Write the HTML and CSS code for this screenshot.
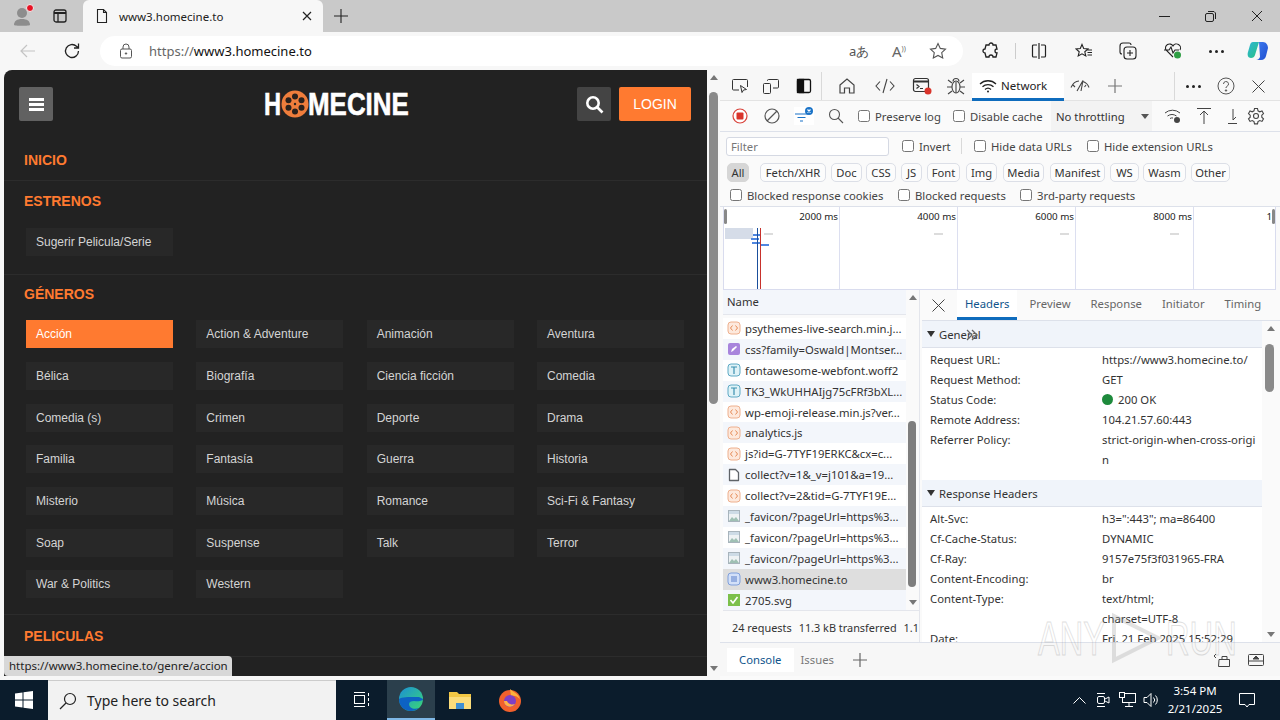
FILE: index.html
```html
<!DOCTYPE html>
<html lang="en">
<head>
  <meta charset="UTF-8" />
  <title>www3.homecine.to</title>
  <link rel="stylesheet" href="styles.css">
</head>
<body>
  <svg class="defs" width="0" height="0">
    <symbol id="i-script" viewBox="0 0 14 14">
      <rect x="1" y="1" width="12" height="12" rx="3" fill="#fde9dd" stroke="#eeb08e"/>
      <path d="M5.5 4.5 3.5 7l2 2.5M8.5 4.5l2 2.5-2 2.5" fill="none" stroke="#e58a55"/>
    </symbol>
    <symbol id="i-css" viewBox="0 0 14 14">
      <rect x="1" y="1" width="12" height="12" rx="2" fill="#a884dc"/>
      <path d="M4 10l1-3 4-3 1 1-4 4z" fill="#fff"/>
    </symbol>
    <symbol id="i-font" viewBox="0 0 14 14">
      <rect x="1" y="1" width="12" height="12" rx="3" fill="#dff2f7" stroke="#5fa9c4"/>
      <path d="M4 4h6M7 4v7" fill="none" stroke="#3b8fb0" stroke-width="1.2"/>
    </symbol>
    <symbol id="i-doc" viewBox="0 0 14 14">
      <path d="M2.5 1.500h6l3 3v8h-9z" fill="#fff" stroke="#5f6368" stroke-width="1.300" stroke-linejoin="round"/>
    </symbol>
    <symbol id="i-img" viewBox="0 0 14 14">
      <rect x="1.500" y="1.500" width="11" height="11" fill="#eef2f4" stroke="#a8b4bc"/>
      <path d="M2 12l3-4 2 2 2-2 3 4z" fill="#9fc0b4"/>
      <rect x="2" y="2" width="10" height="3" fill="#cddbe6"/>
    </symbol>
    <symbol id="i-page" viewBox="0 0 14 14">
      <rect x="1" y="1" width="12" height="12" rx="3" fill="#d3e0f8" stroke="#7f9fdb"/>
      <path d="M4 5h6M4 7h6M4 9h6" stroke="#5b7fc9"/>
    </symbol>
    <symbol id="i-check" viewBox="0 0 14 14">
      <rect x="1" y="1" width="12" height="12" fill="#7cc04b"/>
      <path d="M3.500 7l2.500 3 4.500-6" fill="none" stroke="#fff" stroke-width="1.600"/>
    </symbol>
  </svg>

  <div class="tabstrip">
    <div class="strip-left">
      <svg class="avatar" width="24" height="24" viewBox="0 0 24 24">
        <circle cx="11" cy="9" r="5" fill="#8d8d8d"/>
        <path d="M3 21c0-4 3-6 8-6s8 2 8 6c0 1-16 1-16 0z" fill="#8d8d8d"/>
        <circle cx="19" cy="4" r="3.500" fill="#e81123" stroke="#eee"/>
      </svg>
      <svg width="16" height="16" viewBox="0 0 16 16" fill="none" stroke="#222" stroke-width="1.300">
        <rect x="2" y="2" width="12" height="12" rx="2"/>
        <path d="M2 5h12" stroke-width="2"/>
        <path d="M6 5v9"/>
      </svg>
    </div>
    <div class="tab">
      <svg width="16" height="16" viewBox="0 0 16 16" fill="none" stroke="#222" stroke-width="1.100"><path d="M3.500 1.500h6l3 3v10h-9zM9.500 1.500v3h3"/></svg>
      <span class="tab-title">www3.homecine.to</span>
      <svg width="10" height="10" viewBox="0 0 10 10" stroke="#222" stroke-width="1.200"><path d="M1 1l8 8M9 1l-8 8"/></svg>
    </div>
    <svg class="new-tab" width="14" height="14" viewBox="0 0 14 14" stroke="#222" stroke-width="1.100"><path d="M7 0v14M0 7h14"/></svg>
    <div class="win-controls">
      <svg width="11" height="11" viewBox="0 0 11 11" stroke="#222"><path d="M0 5.500h11"/></svg>
      <svg width="11" height="11" viewBox="0 0 11 11" fill="none" stroke="#222"><rect x="0.500" y="2.500" width="8" height="8" rx="1.500"/><path d="M3 .500h6l1.500 1.500v6"/></svg>
      <svg width="12" height="12" viewBox="0 0 12 12" stroke="#222"><path d="M1 1l10 10M11 1L1 11"/></svg>
    </div>
  </div>

  <div class="toolbar">
    <svg class="tb-back" width="16" height="14" viewBox="0 0 16 14" fill="none" stroke="#c4c4c4" stroke-width="1.200"><path d="M15 7H1M7 1L1 7l6 6"/></svg>
    <svg class="tb-reload" width="18" height="18" viewBox="0 0 18 18" fill="none" stroke="#222" stroke-width="1.300"><path d="M15.500 9a6.500 6.500 0 1 1-2-4.700L15.500 6M15.500 1.500V6H11"/></svg>
    <div class="addressbar">
      <svg width="14" height="16" viewBox="0 0 14 16" fill="none" stroke="#555"><rect x="1.500" y="6" width="11" height="9" rx="1.500"/><path d="M4 6V4a3 3 0 0 1 6 0v2"/><circle cx="7" cy="10.500" r="0.700" fill="#555"/></svg>
      <div class="url"><span class="url-scheme">https://</span>www3.homecine.to</div>
      <span class="addr-glyph">aあ</span>
      <span class="addr-read">A<sup>))</sup></span>
      <svg width="18" height="18" viewBox="0 0 18 18" fill="none" stroke="#555" stroke-width="1.100"><path d="M9 1.500l2.300 4.900 5.200.7-3.800 3.600 1 5.300L9 13.400 4.300 16l1-5.300L1.500 7.100l5.200-.7z"/></svg>
    </div>
    <div class="tb-icons">
      <svg width="18" height="18" viewBox="0 0 18 18" fill="none" stroke="#222" stroke-width="1.300"><path d="M7 3a2 2 0 0 1 4 0h3l1 4a2 2 0 0 0 0 4l-1 4h-3a2 2 0 0 0-4 0H4l-1-4a2 2 0 0 1 0-4l1-4z"/></svg>
      <span class="tb-sep"></span>
      <svg width="16" height="16" viewBox="0 0 16 16" fill="none" stroke="#222" stroke-width="1.200"><path d="M6 2H2.500a1 1 0 0 0-1 1v10a1 1 0 0 0 1 1H6M10 2h3.500a1 1 0 0 1 1 1v10a1 1 0 0 1-1 1H10M8 0v16"/></svg>
      <svg class="tb-fav" width="18" height="16" viewBox="0 0 18 16" fill="none" stroke="#222" stroke-width="1.100"><path d="M7 1.500l1.700 4 4.300.4-3.200 2.900 1 4.200L7 10.800l-3.800 2.200 1-4.200L1 5.900l4.300-.4zM12.500 7H17M12.500 9.500H17M12.500 12H17"/></svg>
      <svg class="tb-coll" width="18" height="18" viewBox="0 0 18 18" fill="none" stroke="#222" stroke-width="1.100"><rect x="5" y="5" width="12" height="12" rx="3"/><path d="M11 8v6M8 11h6M3 12a2 2 0 0 1-2-2V4a3 3 0 0 1 3-3h6a2 2 0 0 1 2 2"/></svg>
      <svg class="tb-health" width="20" height="18" viewBox="0 0 20 18" fill="none" stroke="#222" stroke-width="1.100"><path d="M10 15L3 8a4 4 0 0 1 7-4 4 4 0 0 1 7 4M1 8h5l2-3 2 6 2-3h4"/><circle cx="14.500" cy="13" r="3.500" fill="#2f9e44" stroke="none"/></svg>
      <span class="dots">
        <i></i><i></i><i></i>
      </span>
      <svg class="tb-copilot" width="24" height="24" viewBox="0 0 24 24">
        <defs>
          <linearGradient id="cp-a" x1="0" y1="0" x2="1" y2="1"><stop offset="0" stop-color="#2fb6d8"/><stop offset="1" stop-color="#27c17f"/></linearGradient>
          <linearGradient id="cp-b" x1="0" y1="0" x2="1" y2="1"><stop offset="0" stop-color="#3f7cf0"/><stop offset="1" stop-color="#1f4fd0"/></linearGradient>
        </defs>
        <path d="M7 3h6l-4 13c-.5 2-2 3-4 3-3 0-4-3-3-6l2-7c.5-2 1.500-3 3-3z" fill="url(#cp-a)"/>
        <path d="M13 3h4c3 0 5 3 5 6l-2 8c-.5 2-2 4-5 4h-5c2 0 3-1 4-3z" fill="url(#cp-b)"/>
      </svg>
    </div>
  </div>

  <div class="main">
    <div class="page">
      <header class="site-head">
        <button class="menu-btn"><span></span><span></span><span></span></button>
        <div class="logo">
          <span class="logo-h">H</span>
          <svg width="28" height="28" viewBox="0 0 28 28">
            <circle cx="14" cy="14" r="13.500" fill="#ef7d3c"/>
            <g fill="#2a211d">
              <circle cx="14" cy="6.500" r="3"/><circle cx="14" cy="21.500" r="3"/>
              <circle cx="7.500" cy="10.300" r="3"/><circle cx="20.500" cy="10.300" r="3"/>
              <circle cx="7.500" cy="17.700" r="3"/><circle cx="20.500" cy="17.700" r="3"/>
              <circle cx="14" cy="14" r="1.200"/>
            </g>
          </svg>
          <span class="logo-rest">MECINE</span>
        </div>
        <div class="head-actions">
          <button class="search-btn">
            <svg width="19" height="19" viewBox="0 0 19 19" fill="none" stroke="#fff" stroke-width="2.600"><circle cx="8" cy="8" r="5.700"/><path d="M12 12l5.500 5.500"/></svg>
          </button>
          <button class="login-btn">LOGIN</button>
        </div>
      </header>

      <nav>
        <section class="nav-sec sec-home"><h2>INICIO</h2></section>
        <section class="nav-sec sec-new">
          <h2>ESTRENOS</h2>
          <div class="genres"><a>Sugerir Pelicula/Serie</a></div>
        </section>
        <section class="nav-sec sec-genres">
          <h2>GÉNEROS</h2>
          <div class="genres">
            <a class="on">Acción</a><a>Action &amp; Adventure</a><a>Animación</a><a>Aventura</a>
            <a>Bélica</a><a>Biografía</a><a>Ciencia ficción</a><a>Comedia</a>
            <a>Comedia (s)</a><a>Crimen</a><a>Deporte</a><a>Drama</a>
            <a>Familia</a><a>Fantasía</a><a>Guerra</a><a>Historia</a>
            <a>Misterio</a><a>Música</a><a>Romance</a><a>Sci-Fi &amp; Fantasy</a>
            <a>Soap</a><a>Suspense</a><a>Talk</a><a>Terror</a>
            <a>War &amp; Politics</a><a>Western</a>
          </div>
        </section>
        <section class="nav-sec sec-movies"><h2>PELICULAS</h2></section>
      </nav>
      <div class="status-bubble">https://www3.homecine.to/genre/accion</div>
    </div>

    <div class="page-scroll">
      <span class="arrow-up"></span>
      <span class="page-thumb"></span>
      <span class="arrow-down"></span>
    </div>

    <div class="devtools">
      <div class="dt-tabs">
        <svg width="18" height="16" viewBox="0 0 18 16" fill="none" stroke="#333"><path d="M8 12H2.500a1 1 0 0 1-1-1V2.500a1 1 0 0 1 1-1h13a1 1 0 0 1 1 1V9"/><path d="M9.500 7.500l1.500 7 1.500-2.500 3-.5z"/></svg>
        <svg width="18" height="16" viewBox="0 0 18 16" fill="none" stroke="#333"><rect x="1.500" y="5.500" width="7" height="10" rx="1"/><path d="M5.500 3V2.500a1 1 0 0 1 1-1h9a1 1 0 0 1 1 1V9a1 1 0 0 1-1 1H11"/></svg>
        <svg width="16" height="16" viewBox="0 0 16 16" fill="none" stroke="#111" stroke-width="1.300"><rect x="1.500" y="1.500" width="13" height="13" rx="1.500"/><rect x="1.500" y="1.500" width="6" height="13" fill="#111"/></svg>
        <span class="dt-sep"></span>
        <svg width="18" height="18" viewBox="0 0 18 18" fill="none" stroke="#444" stroke-width="1.200"><path d="M2 8l7-6 7 6v8h-4.500v-5h-5v5H2z"/></svg>
        <svg class="ic-code" width="20" height="16" viewBox="0 0 20 16" fill="none" stroke="#444" stroke-width="1.100"><path d="M5 3.500L1 8l4 4.500M15 3.500L19 8l-4 4.500M12 1L8 15"/></svg>
        <span class="ic-console">
          <svg width="20" height="18" viewBox="0 0 20 18" fill="none" stroke="#333" stroke-width="1.200"><rect x="1.500" y="1.500" width="15" height="13" rx="2"/><path d="M1.500 4.500h15" stroke-width="2"/><path d="M4.500 7.500l2.500 2-2.500 2M8 11.500h3"/><circle cx="16" cy="14" r="3.500" fill="#d9342b" stroke="none"/></svg>
        </span>
        <svg class="ic-bug" width="18" height="18" viewBox="0 0 18 18" fill="none" stroke="#444" stroke-width="1.100"><ellipse cx="9" cy="10" rx="4" ry="6"/><path d="M6 4.500a3 3 0 0 1 6 0M1 3l4 3M17 3l-4 3M0 10h5M18 10h-5M1 17l4-3M17 17l-4-3M9 5v11"/></svg>
        <div class="dt-network">
          <svg width="18" height="14" viewBox="0 0 18 14" fill="none" stroke="#222" stroke-width="1.300"><path d="M1 5a11.500 11.500 0 0 1 16 0M3.500 7.800a8 8 0 0 1 11 0M6 10.500a4.500 4.500 0 0 1 6 0"/><circle cx="9" cy="12.500" r="1" fill="#222" stroke="none"/></svg>
          <span>Network</span>
        </div>
        <svg class="ic-perf" width="20" height="14" viewBox="0 0 20 14" fill="none" stroke="#444" stroke-width="1.100"><path d="M1 8.500C3 4 6 2 9 2M13 2.500c3 1 5 3 6 6M7 12l6-10.500-2 10.500M3 6l2 2M16 6l-1.500 2"/></svg>
        <svg class="ic-plus" width="14" height="14" viewBox="0 0 14 14" stroke="#777" stroke-width="1.200"><path d="M7 0v14M0 7h14"/></svg>
        <span class="dt-sep sep-end"></span>
        <span class="dots dots-dt"><i></i><i></i><i></i></span>
        <svg class="ic-help" width="18" height="18" viewBox="0 0 18 18" fill="none" stroke="#555"><circle cx="9" cy="9" r="8"/><path d="M6.500 7a2.500 2.500 0 1 1 3.500 2.300c-.8.400-1 .9-1 1.700"/><circle cx="9" cy="13.500" r=".7" fill="#555"/></svg>
        <svg class="ic-close" width="13" height="13" viewBox="0 0 13 13" stroke="#444"><path d="M.500.500l12 12M12.500.500l-12 12"/></svg>
      </div>

      <div class="dt-tools">
        <svg width="16" height="16" viewBox="0 0 16 16"><circle cx="8" cy="8" r="7" fill="#fff" stroke="#d9423a" stroke-width="1.200"/><rect x="4.500" y="4.500" width="7" height="7" rx="1" fill="#d9342b"/></svg>
        <svg class="ic-clear" width="16" height="16" viewBox="0 0 16 16" fill="none" stroke="#555" stroke-width="1.200"><circle cx="8" cy="8" r="7"/><path d="M3 13L13 3"/></svg>
        <svg class="ic-filter" width="20" height="18" viewBox="0 0 20 18" fill="none" stroke="#1a73c7" stroke-width="1.200"><path d="M1 7h13M3.500 10.500h8M6 14h3"/><circle cx="15" cy="4" r="4" fill="#1a73c7" stroke="none"/><path d="M13.500 2.500l3 3M16.500 2.500l-3 3" stroke="#fff"/></svg>
        <svg class="ic-search" width="16" height="16" viewBox="0 0 16 16" fill="none" stroke="#555" stroke-width="1.100"><circle cx="6.500" cy="6.500" r="5"/><path d="M10 10l5 5"/></svg>
        <label class="cb lb-preserve"><input type="checkbox">Preserve log</label>
        <label class="cb lb-cache"><input type="checkbox">Disable cache</label>
        <div class="throttle"><span>No throttling</span><i class="caret"></i></div>
        <svg class="ic-wifi" width="18" height="16" viewBox="0 0 18 16" fill="none" stroke="#444"><path d="M1 5a11.500 11.500 0 0 1 15 0M3.500 8a8 8 0 0 1 9 0M6 10.500a4 4 0 0 1 3-.5"/><circle cx="13" cy="12" r="3" fill="#444" stroke="none"/></svg>
        <svg class="ic-up" width="14" height="16" viewBox="0 0 14 16" fill="none" stroke="#444"><path d="M0 .500h14M7 3v13M3 7l4-4 4 4"/></svg>
        <svg class="ic-down" width="10" height="16" viewBox="0 0 10 16" fill="none" stroke="#444"><path d="M1 15.500h9M6 1v11M9 9l-3 3"/></svg>
        <svg class="ic-gear" width="18" height="18" viewBox="0 0 18 18" fill="none" stroke="#444" stroke-width="1.100"><path d="M7.500 1.500h3l.5 2.300 1.800 1 2.200-.8 1.500 2.600-1.700 1.600v2l1.700 1.600-1.500 2.600-2.200-.8-1.800 1-.5 2.300h-3l-.5-2.300-1.800-1-2.200.8-1.500-2.600 1.700-1.600v-2L1.500 6.600 3 4l2.200.8 1.800-1z"/><circle cx="9" cy="9" r="2.500"/></svg>
      </div>

      <div class="dt-filter">
        <div class="filter-input">Filter</div>
        <label class="cb lb-invert"><input type="checkbox">Invert</label>
        <span class="dt-sep filter-sep"></span>
        <label class="cb lb-data"><input type="checkbox">Hide data URLs</label>
        <label class="cb lb-ext"><input type="checkbox">Hide extension URLs</label>
      </div>

      <div class="chips">
        <span class="chip chip-on">All</span>
        <span class="chip">Fetch/XHR</span>
        <span class="chip">Doc</span>
        <span class="chip">CSS</span>
        <span class="chip">JS</span>
        <span class="chip">Font</span>
        <span class="chip">Img</span>
        <span class="chip">Media</span>
        <span class="chip">Manifest</span>
        <span class="chip">WS</span>
        <span class="chip">Wasm</span>
        <span class="chip">Other</span>
      </div>

      <div class="dt-blocked">
        <label class="cb lb-cookies"><input type="checkbox">Blocked response cookies</label>
        <label class="cb lb-requests"><input type="checkbox">Blocked requests</label>
        <label class="cb"><input type="checkbox">3rd-party requests</label>
      </div>

      <div class="overview">
        <div class="ov-col"><span>2000 ms</span></div>
        <div class="ov-col"><span>4000 ms</span></div>
        <div class="ov-col"><span>6000 ms</span></div>
        <div class="ov-col"><span>8000 ms</span></div>
        <div class="ov-col ov-last"><span>1</span></div>
        <i class="ov-handle ov-left"></i>
        <i class="ov-handle ov-right"></i>
        <i class="ov-block"></i>
        <i class="ov-bar bar-a"></i><i class="ov-bar bar-b"></i><i class="ov-bar bar-c"></i><i class="ov-bar bar-d"></i>
        <i class="ov-dash dash-a"></i><i class="ov-dash dash-b"></i><i class="ov-dash dash-c"></i><i class="ov-dash dash-d"></i>
        <i class="ov-line line-blue"></i>
        <i class="ov-line line-red"></i>
      </div>

      <div class="split">
        <div class="reqs">
          <div class="reqs-body">
            <div class="reqs-table">
              <div class="reqs-head">Name</div>
              <ul class="req-list">
                <li><svg width="14" height="14"><use href="#i-script"/></svg><span>psythemes-live-search.min.j...</span></li>
                <li><svg width="14" height="14"><use href="#i-css"/></svg><span>css?family=Oswald|Montser...</span></li>
                <li><svg width="14" height="14"><use href="#i-font"/></svg><span>fontawesome-webfont.woff2</span></li>
                <li><svg width="14" height="14"><use href="#i-font"/></svg><span>TK3_WkUHHAIjg75cFRf3bXL...</span></li>
                <li><svg width="14" height="14"><use href="#i-script"/></svg><span>wp-emoji-release.min.js?ver...</span></li>
                <li><svg width="14" height="14"><use href="#i-script"/></svg><span>analytics.js</span></li>
                <li><svg width="14" height="14"><use href="#i-script"/></svg><span>js?id=G-7TYF19ERKC&amp;cx=c...</span></li>
                <li><svg width="14" height="14"><use href="#i-doc"/></svg><span>collect?v=1&amp;_v=j101&amp;a=19...</span></li>
                <li><svg width="14" height="14"><use href="#i-script"/></svg><span>collect?v=2&amp;tid=G-7TYF19E...</span></li>
                <li><svg width="14" height="14"><use href="#i-img"/></svg><span>_favicon/?pageUrl=https%3...</span></li>
                <li><svg width="14" height="14"><use href="#i-img"/></svg><span>_favicon/?pageUrl=https%3...</span></li>
                <li><svg width="14" height="14"><use href="#i-img"/></svg><span>_favicon/?pageUrl=https%3...</span></li>
                <li class="sel"><svg width="14" height="14"><use href="#i-page"/></svg><span>www3.homecine.to</span></li>
                <li><svg width="14" height="14"><use href="#i-check"/></svg><span>2705.svg</span></li>
              </ul>
            </div>
            <div class="list-scroll">
              <span class="arrow-up"></span>
              <span class="list-thumb"></span>
              <span class="arrow-down"></span>
            </div>
          </div>
          <div class="reqs-foot">
            <span>24 requests</span><span>11.3 kB transferred</span><span>1.1</span>
          </div>
        </div>

        <div class="details">
          <div class="detail-tabs">
            <svg width="13" height="13" viewBox="0 0 13 13" stroke="#444"><path d="M.500.500l12 12M12.500.500l-12 12"/></svg>
            <span class="dtab dtab-on">Headers</span>
            <span class="dtab">Preview</span>
            <span class="dtab">Response</span>
            <span class="dtab">Initiator</span>
            <span class="dtab">Timing</span>
          </div>
          <div class="detail-body">
            <div class="detail-scrollarea">
              <h3 class="group"><i class="tri"></i>General</h3>
              <dl class="kv">
                <dt>Request URL:</dt><dd>https://www3.homecine.to/</dd>
                <dt>Request Method:</dt><dd>GET</dd>
                <dt>Status Code:</dt><dd><i class="dot"></i>200 OK</dd>
                <dt>Remote Address:</dt><dd>104.21.57.60:443</dd>
                <dt>Referrer Policy:</dt><dd>strict-origin-when-cross-origi<br>n</dd>
              </dl>
              <h3 class="group"><i class="tri"></i>Response Headers</h3>
              <dl class="kv">
                <dt>Alt-Svc:</dt><dd>h3=":443"; ma=86400</dd>
                <dt>Cf-Cache-Status:</dt><dd>DYNAMIC</dd>
                <dt>Cf-Ray:</dt><dd>9157e75f3f031965-FRA</dd>
                <dt>Content-Encoding:</dt><dd>br</dd>
                <dt>Content-Type:</dt><dd>text/html;<br>charset=UTF-8</dd>
                <dt>Date:</dt><dd class="nowrap">Fri, 21 Feb 2025 15:52:29</dd>
              </dl>
            </div>
            <div class="detail-scroll">
              <span class="arrow-up"></span>
              <span class="detail-thumb"></span>
              <span class="arrow-down"></span>
            </div>
            <svg class="cursor" width="13" height="12" viewBox="0 0 13 12" fill="none" stroke="#666" stroke-width="1.300"><path d="M1 1l5 5-5 5M6 1l5 5-5 5"/></svg>
          </div>
        </div>
      </div>

      <div class="drawer">
        <span class="drawer-tab drawer-on">Console</span>
        <span class="drawer-tab drawer-issues">Issues</span>
        <svg width="14" height="14" viewBox="0 0 14 14" stroke="#666" stroke-width="1.200"><path d="M7 0v14M0 7h14"/></svg>
        <svg class="ic-dock" width="18" height="14" viewBox="0 0 18 14" fill="none" stroke="#444"><path d="M6 6.500h10.500v7h-11zM9 6.500V3.500h5v3M1 3l2-2M1 3l2 2"/></svg>
        <svg class="ic-dock2" width="18" height="14" viewBox="0 0 18 14" fill="none" stroke="#444"><rect x="1.500" y="1.500" width="15" height="11" rx="1"/><path d="M1.500 8h15"/><path d="M6 6l3-3 3 3z" fill="#444"/></svg>
      </div>

      <div class="watermark">
        <span>ANY</span>
        <svg width="56" height="56" viewBox="0 0 56 56" fill="none" stroke="#999" stroke-width="4"><path d="M6 6l44 22-44 22z"/></svg>
        <span>RUN</span>
      </div>
    </div>
  </div>

  <footer class="taskbar">
    <div class="start">
      <svg width="18" height="18" viewBox="0 0 18 18" fill="#fff"><path d="M0 2.500l7.500-1v7H0zM8.500 1.300L18 0v8.500H8.500zM0 9.500h7.500v7l-7.500-1zM8.500 9.500H18V18l-9.500-1.300z"/></svg>
    </div>
    <div class="task-search">
      <svg width="18" height="18" viewBox="0 0 18 18" fill="none" stroke="#222" stroke-width="1.200"><circle cx="11" cy="7" r="5.500"/><path d="M7 11l-6 6"/></svg>
      <span>Type here to search</span>
    </div>
    <div class="task-view">
      <svg width="17" height="16" viewBox="0 0 17 16" fill="none" stroke="#fff"><rect x="1.500" y="3.500" width="10" height="8"/><path d="M1 .500h11M1 14.500h11M15.500 1v3M15.500 6v3M15.500 11v3" /></svg>
    </div>
    <div class="task-edge">
      <svg width="26" height="26" viewBox="0 0 26 26">
        <defs>
          <linearGradient id="ed-a" x1="0" y1="0" x2="1" y2="1"><stop offset="0" stop-color="#1b8fd6"/><stop offset="1" stop-color="#3bd873"/></linearGradient>
        </defs>
        <circle cx="13" cy="13" r="12" fill="url(#ed-a)"/>
        <path d="M1 13c0 7 5 12 12 12 3 0 6-1 8-3-5 2-10 0-10-4 0-2 2-3 5-3 3 0 4 1 9-1 0-1-2-3-6-3-9 0-15 0-18 2z" fill="#0d62c4"/>
      </svg>
    </div>
    <div class="task-app">
      <svg width="24" height="22" viewBox="0 0 24 22"><path d="M1 3h8l2 2h12v15H1z" fill="#f2c744"/><path d="M1 8h22v12H1z" fill="#fbdc7a"/><rect x="8" y="14" width="8" height="6" fill="#3f8fd1"/></svg>
    </div>
    <div class="task-app">
      <svg width="24" height="24" viewBox="0 0 24 24"><circle cx="12" cy="13" r="11" fill="#f0602c"/><path d="M12 1c3 3 8 4 10 10-3-3-6-4-9-3z" fill="#fbb03b"/><circle cx="12" cy="13" r="6" fill="#7f3fc4"/><path d="M6 13a6 6 0 0 0 11 3c-3 1-7 0-8-3z" fill="#ffb347"/></svg>
    </div>
    <div class="tray">
      <div class="tray-cell"><svg width="13" height="8" viewBox="0 0 13 8" fill="none" stroke="#fff"><path d="M.500 7.500l6-6 6 6"/></svg></div>
      <div class="tray-cell"><svg width="16" height="18" viewBox="0 0 16 18" fill="none" stroke="#fff"><rect x="2.500" y="5.500" width="7" height="7" rx="1.500"/><path d="M10 8l4-2v6l-4-2M2 2.500h8M2 15.500h8"/></svg></div>
      <div class="tray-cell"><svg width="17" height="16" viewBox="0 0 17 16" fill="none" stroke="#fff"><rect x="3.500" y="1.500" width="13" height="9"/><rect x=".500" y=".500" width="5" height="5" fill="#0b1c2c"/><path d="M10 10.500v4M6 14.500h8"/></svg></div>
      <div class="tray-cell"><svg width="17" height="16" viewBox="0 0 17 16" fill="none" stroke="#fff"><path d="M1 5.500h3l4-4v13l-4-4H1zM10.500 5.500a3.500 3.500 0 0 1 0 5M12.500 3.500a6.500 6.500 0 0 1 0 9"/></svg></div>
      <div class="clock"><span>3:54 PM</span><span>2/21/2025</span></div>
      <svg class="tray-note" width="16" height="15" viewBox="0 0 16 15" fill="none" stroke="#fff"><path d="M.500.500h15v11H10l-2 2.500-2-2.500H.500z"/></svg>
    </div>
  </footer>
</body>
</html>
```

FILE: styles.css
```css
* {
  box-sizing: border-box;
}

body {
  margin: 0;
  width: 1280px;
  height: 720px;
  overflow: hidden;
  display: flex;
  flex-direction: column;
  background: #f7f7f7;
  font-family: "Noto Sans", sans-serif;
  font-size: 12px;
  color: #222;
}

.defs {
  position: absolute;
}

svg {
  display: block;
  flex: none;
}

/* browser chrome */
.tabstrip {
  height: 32px;
  flex: none;
  display: flex;
  align-items: center;
  background: #c9c9c9;
}

.strip-left {
  width: 83px;
  height: 32px;
  display: flex;
  align-items: center;
  gap: 17px;
  padding-left: 11px;
}

.tab {
  width: 240px;
  height: 32px;
  display: flex;
  align-items: center;
  padding: 0 11px 0 11px;
  background: #f7f7f7;
  border-radius: 6px 6px 0 0;
}

.tab-title {
  flex: 1;
  margin-left: 9px;
  font-size: 11.500px;
  color: #222;
}

.new-tab {
  margin-left: 11px;
}

.win-controls {
  margin-left: auto;
  display: flex;
  align-items: center;
  gap: 35px;
  padding-right: 17px;
}

.toolbar {
  height: 38px;
  flex: none;
  display: flex;
  align-items: center;
  background: #f7f7f7;
}

.tb-back {
  margin-left: 20px;
}

.tb-reload {
  margin-left: 27px;
}

.addressbar {
  width: 863px;
  height: 30px;
  margin-left: 19px;
  display: flex;
  align-items: center;
  background: #fff;
  border-radius: 15px;
  padding-left: 19px;
}

.url {
  width: 700px;
  margin-left: 16px;
  font-size: 13px;
  color: #111;
}

.url-scheme {
  color: #666;
}

.addr-glyph {
  width: 43px;
  font-size: 13px;
  color: #555;
}

.addr-read {
  width: 37px;
  font-size: 15px;
  color: #666;
}

.addr-read sup {
  font-size: 7px;
}

.tb-icons {
  display: flex;
  align-items: center;
  margin-left: 19px;
}

.tb-sep {
  width: 1px;
  height: 16px;
  margin: 0 15px;
  background: #ccc;
}

.tb-fav {
  margin-left: 28px;
}

.tb-coll {
  margin-left: 26px;
}

.tb-health {
  margin-left: 26px;
}

.dots {
  display: flex;
  gap: 3px;
  margin-left: 26px;
}

.dots i {
  width: 3px;
  height: 3px;
  border-radius: 50%;
  background: #222;
}

.tb-copilot {
  margin-left: 22px;
}

.main {
  height: 610px;
  flex: none;
  display: flex;
  padding-left: 4px;
  background: #f7f7f7;
}

/* site */
.page {
  position: relative;
  width: 703px;
  height: 606px;
  overflow: hidden;
  background: #222;
  border-radius: 8px 0 0 0;
  font-family: "Liberation Sans", Arial, sans-serif;
  color: #ddd;
}

.site-head {
  height: 70px;
  display: flex;
  justify-content: space-between;
  align-items: flex-start;
  padding: 17px 16px 0 15px;
}

.menu-btn {
  width: 34px;
  height: 34px;
  display: flex;
  flex-direction: column;
  align-items: center;
  justify-content: center;
  gap: 2px;
  padding: 0;
  border: 0;
  border-radius: 2px;
  background: #616161;
}

.menu-btn span {
  width: 15px;
  height: 3px;
  background: #fff;
}

.logo {
  width: 143px;
  height: 34px;
  margin-left: 40px;
  display: flex;
  align-items: center;
  font-weight: 700;
  font-size: 32px;
  color: #fff;
  -webkit-text-stroke: .6px #fff;
}

.logo-h {
  width: 17px;
  display: inline-block;
  transform: scaleX(.74);
  transform-origin: left;
}

.logo-rest {
  width: 99px;
  margin-left: -1px;
  display: inline-block;
  transform: scaleX(.81);
  transform-origin: left;
}

.head-actions {
  display: flex;
  gap: 8px;
}

.search-btn {
  width: 34px;
  height: 34px;
  display: flex;
  align-items: center;
  justify-content: center;
  padding: 0;
  border: 0;
  border-radius: 2px;
  background: #444;
}

.login-btn {
  width: 72px;
  height: 34px;
  padding: 0;
  border: 0;
  border-radius: 2px;
  background: #ff7a30;
  color: #fff;
  font-family: inherit;
  font-size: 14px;
}

.nav-sec {
  padding: 12px 0 0 20px;
  border-bottom: 1px solid #2c2c2c;
}

.nav-sec h2 {
  margin: 0;
  font-size: 14px;
  line-height: 16px;
  color: #ff7a30;
}

.sec-home {
  height: 41px;
}

.sec-new {
  height: 94px;
}

.sec-genres {
  height: 340px;
  padding-top: 11px;
}

.sec-movies {
  height: 42px;
  padding-top: 13px;
}

.genres {
  width: 658px;
  margin: 19px 0 0 2px;
  display: grid;
  grid-template-columns: repeat(4, 147px);
  grid-auto-rows: 28px;
  column-gap: 23.330px;
  row-gap: 13.670px;
}

.sec-genres .genres {
  margin-top: 18.300px;
}

.genres a {
  display: flex;
  align-items: center;
  padding-left: 10px;
  background: #282828;
  font-size: 12px;
  color: #d4d4d4;
}

.genres a.on {
  background: #ff7a30;
  color: #fff;
}

.status-bubble {
  position: absolute;
  left: 0;
  bottom: 0;
  width: 228px;
  height: 20px;
  padding-left: 5px;
  background: #d8d8d8;
  border-radius: 0 4px 0 4px;
  font-family: "Noto Sans", sans-serif;
  font-size: 11.500px;
  line-height: 20px;
  color: #222;
}

.page-scroll {
  width: 13px;
  height: 606px;
  flex: none;
  position: relative;
  background: #f7f7f7;
}

.arrow-up,
.arrow-down {
  position: absolute;
  left: 50%;
  margin-left: -4px;
  border-left: 4px solid transparent;
  border-right: 4px solid transparent;
}

.arrow-up {
  top: 5px;
  border-bottom: 5px solid #777;
}

.arrow-down {
  bottom: 5px;
  border-top: 5px solid #777;
}

.page-thumb {
  position: absolute;
  left: 2px;
  top: 22px;
  width: 9px;
  height: 312px;
  border-radius: 5px;
  background: #8a8a8a;
}

/* devtools */
.devtools {
  position: relative;
  width: 560px;
  height: 610px;
  flex: none;
  display: flex;
  flex-direction: column;
  font-size: 11.300px;
  color: #333;
  background: #fafafa;
  overflow: hidden;
}

.dt-tabs {
  height: 31px;
  flex: none;
  display: flex;
  align-items: center;
  padding: 2px 0 0 11px;
  background: #f7f7f7;
  border-bottom: 1px solid #e3e3e3;
}

.dt-tabs > svg:nth-child(2) {
  margin-left: 13px;
}

.dt-tabs > svg:nth-child(3) {
  margin-left: 16px;
}

.dt-sep {
  width: 1px;
  height: 28px;
  margin-left: 9px;
  background: #d9d9d9;
}

.dt-tabs > svg:nth-child(5) {
  margin-left: 16px;
}

.ic-code {
  margin-left: 19px;
}

.ic-console {
  margin-left: 17px;
}

.ic-bug {
  margin-left: 15px;
}

.dt-network {
  width: 92px;
  height: 28px;
  margin: 0 0 -2px 7px;
  display: flex;
  align-items: center;
  gap: 4px;
  padding: 0 0 0 7px;
  background: #fff;
  border-bottom: 3px solid #0f6cbd;
  color: #222;
  font-size: 11.500px;
}

.ic-perf {
  margin-left: 6px;
}

.ic-plus {
  margin-left: 18px;
}

.sep-end {
  margin-left: 52px;
}

.dots-dt {
  margin-left: 11px;
}

.ic-help {
  margin-left: 16px;
}

.ic-close {
  margin-left: 17px;
}

.dt-tools {
  height: 31px;
  flex: none;
  display: flex;
  align-items: center;
  padding-left: 12px;
  background: #fafafa;
  border-bottom: 1px solid #dde1ea;
}

.ic-clear {
  margin-left: 16px;
}

.ic-filter {
  margin-left: 14px;
  background: #fff;
}

.ic-search {
  margin-left: 14px;
}

.cb {
  display: flex;
  align-items: center;
  gap: 5px;
  white-space: nowrap;
  color: #444;
}

.cb input {
  width: 12px;
  height: 12px;
  margin: 0;
}

.lb-preserve {
  width: 95px;
  margin-left: 14px;
}

.lb-cache {
  width: 98px;
}

.throttle {
  width: 101px;
  height: 30px;
  display: flex;
  align-items: center;
  justify-content: space-between;
  background: #f3f3f3;
  padding: 0 3px 0 5px;
}

.caret {
  border-left: 4px solid transparent;
  border-right: 4px solid transparent;
  border-top: 5px solid #555;
}

.ic-wifi {
  margin-left: 12px;
}

.ic-up {
  margin-left: 15px;
}

.ic-down {
  margin-left: 16px;
}

.ic-gear {
  margin-left: 10px;
}

.dt-filter {
  height: 28px;
  flex: none;
  display: flex;
  align-items: center;
  padding-left: 6px;
}

.filter-input {
  width: 163px;
  height: 19px;
  padding-left: 4px;
  background: #fff;
  border: 1px solid #d5d9e3;
  border-radius: 3px;
  line-height: 17px;
  color: #777;
}

.lb-invert {
  width: 59px;
  margin-left: 13px;
}

.filter-sep {
  height: 16px;
  margin-left: 0;
}

.lb-data {
  width: 113px;
  margin-left: 12px;
}

.chips {
  height: 24px;
  flex: none;
  display: flex;
  align-items: center;
  padding-left: 7px;
}

.chip {
  height: 19px;
  display: flex;
  align-items: center;
  justify-content: center;
  border: 1px solid #dcdfe7;
  border-radius: 5px;
  font-size: 11.200px;
  background: #fcfcfc;
  color: #333;
}

.chip:nth-child(1) { width: 22px; margin-right: 11px; border-color: #d6d6d6; background: #d6d6d6; }
.chip:nth-child(2) { width: 66px; margin-right: 5px; }
.chip:nth-child(3) { width: 31px; margin-right: 4px; }
.chip:nth-child(4) { width: 30px; margin-right: 5px; }
.chip:nth-child(5) { width: 21px; margin-right: 5px; }
.chip:nth-child(6) { width: 33px; margin-right: 6px; }
.chip:nth-child(7) { width: 31px; margin-right: 6px; }
.chip:nth-child(8) { width: 41px; margin-right: 6px; }
.chip:nth-child(9) { width: 55px; margin-right: 5px; }
.chip:nth-child(10) { width: 29px; margin-right: 4px; }
.chip:nth-child(11) { width: 43px; margin-right: 5px; }
.chip:nth-child(12) { width: 39px; }

.dt-blocked {
  height: 23px;
  flex: none;
  display: flex;
  align-items: center;
  padding-left: 10px;
  border-bottom: 1px solid #dde1ea;
}

.lb-cookies {
  width: 168px;
}

.lb-requests {
  width: 122px;
}

.overview {
  position: relative;
  height: 83px;
  flex: none;
  margin-left: 3px;
  width: 553px;
  display: flex;
  background: #fff;
  border-left: 1px solid #d9dcee;
  border-right: 1px solid #d9dcee;
  border-bottom: 1px solid #d9dcee;
}

.ov-col {
  width: 118px;
  padding: 3px 1px 0 0;
  border-right: 1px solid #dcdff0;
  text-align: right;
  font-size: 9.800px;
  color: #222;
}

.ov-col:first-child {
  width: 116px;
}

.ov-last {
  flex: 1;
  border-right: 0;
  padding-right: 3px;
}

.ov-handle {
  position: absolute;
  top: 2px;
  width: 3px;
  height: 15px;
  border-radius: 2px;
  background: #888;
}

.ov-left {
  left: 0;
}

.ov-right {
  right: 0;
}

.ov-block {
  position: absolute;
  left: 1px;
  top: 21px;
  width: 28px;
  height: 11px;
  background: #d5dce8;
}

.ov-bar {
  position: absolute;
  height: 2px;
  background: #4f86e0;
}

.bar-a { left: 29px; top: 27px; width: 7px; }
.bar-b { left: 27px; top: 31px; width: 8px; }
.bar-c { left: 28px; top: 35px; width: 9px; }
.bar-d { left: 36px; top: 37px; width: 9px; }

.ov-dash {
  position: absolute;
  top: 26px;
  width: 9px;
  height: 2px;
  background: #dcdcdc;
}

.dash-a { left: 40px; }
.dash-b { left: 210px; }
.dash-c { left: 336px; }
.dash-d { left: 446px; }

.ov-line {
  position: absolute;
  top: 21px;
  bottom: 0;
  width: 1px;
}

.line-blue {
  left: 33px;
  background: #1a4f9c;
}

.line-red {
  left: 36px;
  background: #c8322c;
}

.split {
  height: 353px;
  flex: none;
  display: flex;
  border-bottom: 1px solid #dde1ea;
}

.reqs {
  width: 200px;
  flex: none;
  padding-left: 3px;
  border-right: 1px solid #e4e6ec;
}

.reqs-body {
  height: 321px;
  display: flex;
  border-bottom: 1px solid #e4e6ec;
}

.reqs-table {
  width: 183px;
  flex: none;
}

.reqs-head {
  height: 25px;
  padding-left: 4px;
  line-height: 23px;
  background: #f3f6fb;
  border-bottom: 1px solid #e4e6ec;
  margin-bottom: 3px;
}

.req-list {
  margin: 0;
  padding: 0;
  list-style: none;
  background: #fff;
}

.req-list li {
  height: 20.900px;
  display: flex;
  align-items: center;
  gap: 4px;
  padding-left: 4px;
  color: #333;
}

.req-list li:nth-child(even) {
  background: #f3f6fb;
}

.req-list li.sel {
  background: #dedede;
}

.req-list span {
  white-space: nowrap;
}

.list-scroll {
  position: relative;
  flex: 1;
  background: #fafafa;
}

.list-thumb {
  position: absolute;
  left: 2px;
  top: 131px;
  width: 8px;
  height: 166px;
  border-radius: 4px;
  background: #7e7e7e;
}

.reqs-foot {
  height: 32px;
  display: flex;
  align-items: center;
  gap: 7px;
  padding-left: 9px;
  font-size: 10.900px;
  white-space: nowrap;
}

.details {
  flex: 1;
  min-width: 0;
  padding-left: 2px;
  display: flex;
  flex-direction: column;
}

.detail-tabs {
  height: 31px;
  flex: none;
  display: flex;
  align-items: center;
  padding-left: 10px;
  background: #fafafa;
  border-bottom: 1px solid #dde1ea;
}

.dtab {
  height: 30px;
  padding: 0 8px;
  margin-right: 4px;
  line-height: 28px;
  color: #666;
}

.detail-tabs svg {
  margin-right: 12px;
}

.dtab-on {
  color: #0f548c;
  background: #fff;
  border-bottom: 3px solid #0f6cbd;
}

.detail-body {
  position: relative;
  flex: 1;
  min-height: 0;
  display: flex;
  overflow: hidden;
}

.detail-scrollarea {
  width: 340px;
  flex: none;
  background: #fff;
  overflow: hidden;
}

.group {
  height: 27px;
  margin: 0;
  display: flex;
  align-items: center;
  padding-left: 5px;
  background: #f0f4fa;
  border-bottom: 1px solid #dde1ea;
  font-size: 11.300px;
  font-weight: 400;
  color: #333;
}

.tri {
  width: 0;
  height: 0;
  margin-right: 4px;
  border-left: 4px solid transparent;
  border-right: 4px solid transparent;
  border-top: 6px solid #333;
}

.kv {
  margin: 0;
  padding: 2px 0 10px 8px;
  display: grid;
  grid-template-columns: 172px 160px;
  line-height: 20px;
  color: #333;
}

.kv dt {
  grid-column: 1;
}

.kv dd {
  grid-column: 2;
  margin: 0;
  white-space: nowrap;
}

.dot {
  display: inline-block;
  width: 11px;
  height: 11px;
  margin-right: 5px;
  vertical-align: -1px;
  border-radius: 50%;
  background: #1e8a3c;
}

.detail-scroll {
  position: relative;
  flex: 1;
  background: #fafafa;
}

.detail-thumb {
  position: absolute;
  left: 3px;
  top: 23px;
  width: 9px;
  height: 48px;
  border-radius: 5px;
  background: #8a8a8a;
}

.cursor {
  position: absolute;
  left: 44px;
  top: 8px;
}

.drawer {
  height: 33px;
  flex: none;
  display: flex;
  align-items: center;
  padding-left: 7px;
  background: #f7f7f7;
}

.drawer-tab {
  height: 24px;
  padding: 0 12px;
  line-height: 23px;
  color: #777;
}

.drawer-issues {
  padding: 0 12px 0 7px;
}

.drawer-on {
  background: #fff;
  color: #0f548c;
}

.drawer svg {
  margin-left: 7px;
}

.drawer .ic-dock {
  margin-left: 346px;
}

.drawer .ic-dock2 {
  margin-left: 16px;
}

.watermark {
  position: absolute;
  left: 318px;
  top: 540px;
  display: flex;
  align-items: center;
  gap: 2px;
  opacity: .28;
  font-family: "Liberation Sans", Arial, sans-serif;
  font-size: 48px;
  color: transparent;
  -webkit-text-stroke: 1px #8a8a8a;
  pointer-events: none;
}

.watermark span {
  width: 68px;
  transform: scaleX(.68);
  transform-origin: left;
}

/* windows taskbar */
.taskbar {
  height: 40px;
  flex: none;
  display: flex;
  align-items: center;
  background: #0b1c2c;
  color: #fff;
}

.start {
  width: 48px;
  height: 40px;
  display: flex;
  align-items: center;
  justify-content: center;
}

.task-search {
  width: 288px;
  height: 40px;
  display: flex;
  align-items: center;
  gap: 10px;
  padding-left: 11px;
  background: #f2f2f2;
  border-top: 1px solid #ccc;
  font-size: 14px;
  color: #222;
}

.task-view {
  width: 51px;
  display: flex;
  justify-content: center;
}

.task-edge {
  width: 48px;
  height: 40px;
  display: flex;
  align-items: center;
  justify-content: center;
  background: #2b3f4c;
  border-bottom: 2px solid #7fb8e6;
}

.task-app {
  width: 50px;
  display: flex;
  justify-content: center;
}

.tray {
  margin-left: auto;
  width: 213px;
  display: flex;
  align-items: center;
}

.tray-cell {
  width: 24px;
  display: flex;
  justify-content: center;
}

.clock {
  width: 64px;
  display: flex;
  flex-direction: column;
  align-items: center;
  font-size: 11.500px;
  line-height: 18px;
}

.tray-note {
  margin-left: 12px;
}
```
